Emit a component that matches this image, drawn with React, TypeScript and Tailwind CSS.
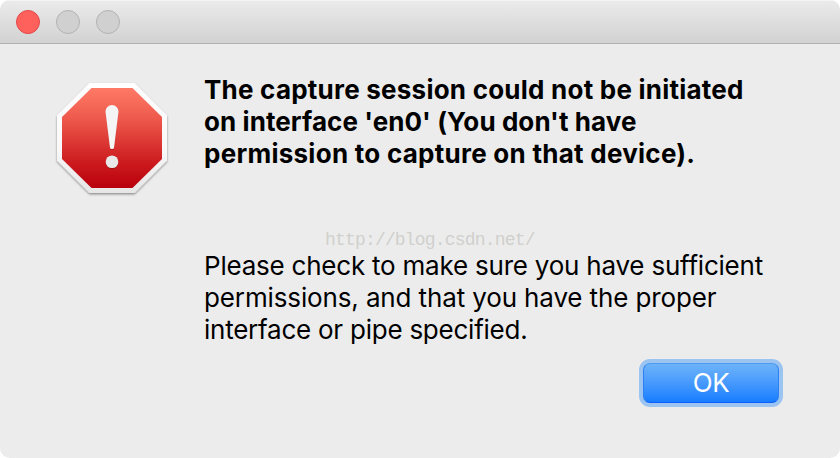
import { useState } from "react";

const StopIcon = () => (
  <svg width="120" height="122" viewBox="52 78 120 122" className="block" aria-hidden="true">
    <defs>
      <linearGradient id="rim" x1="0" y1="0" x2="0" y2="1">
        <stop offset="0" stopColor="#ffffff" />
        <stop offset="0.6" stopColor="#f8f8f8" />
        <stop offset="1" stopColor="#e6e6e6" />
      </linearGradient>
      <linearGradient id="red" x1="0" y1="0" x2="0" y2="1">
        <stop offset="0" stopColor="#ff7a66" />
        <stop offset="0.3" stopColor="#ee5a4d" />
        <stop offset="0.75" stopColor="#cc1a1e" />
        <stop offset="1" stopColor="#b9000d" />
      </linearGradient>
      <filter id="shadow" x="-10%" y="-10%" width="120%" height="125%">
        <feDropShadow dx="0" dy="1.3" stdDeviation="1.3" floodColor="#000" floodOpacity="0.42" />
      </filter>
      <filter id="markShadow" x="-30%" y="-10%" width="160%" height="125%">
        <feDropShadow dx="0" dy="0.8" stdDeviation="0.7" floodColor="#500" floodOpacity="0.4" />
      </filter>
    </defs>
    <path d="M89.500 83H134.500L167 115.500V160.500L134.500 193H89.500L57 160.500V115.500Z" fill="url(#rim)" filter="url(#shadow)" />
    <path d="M91.500 88H132.500L162 117V159L132.500 188H91.500L62 159V117Z" fill="url(#red)" />
    <g fill="#f5f5f5" filter="url(#markShadow)">
      <path d="M105.500 111.500A6.500 6.500 0 0 1 118.500 111.500L114 147.500Q113.800 149 112 149Q110.200 149 110 147.500Z" />
      <circle cx="112" cy="161.800" r="6.300" fill="#e9e9e9" />
    </g>
  </svg>
);

export default function App() {
  const [open, setOpen] = useState(true);

  if (!open) return null;

  return (
    <div className="h-[458px] w-[840px] bg-white font-['Inter',sans-serif] text-black">
      <div className="relative flex h-full flex-col overflow-hidden rounded-[10px] bg-[#ececec]">
        <header className="flex h-11 shrink-0 items-center gap-4 border-b border-[#b1b1b1] bg-linear-to-b from-[#ebebeb] to-[#d2d2d2] px-4 shadow-[inset_0_1px_0_#f5f5f5]">
          <button
            aria-label="Close"
            onClick={() => setOpen(false)}
            className="size-6 rounded-full border border-[#e2484a] bg-[#fe605c]"
          />
          <span className="size-6 rounded-full border border-[#b2b2b2] bg-[#d0d0d0]" />
          <span className="size-6 rounded-full border border-[#b2b2b2] bg-[#d0d0d0]" />
        </header>

        <main className="flex pl-[52px] pt-[30px]">
          <div className="mt-1 w-[152px] shrink-0">
            <StopIcon />
          </div>
          <div className="whitespace-nowrap text-[26px] leading-8">
            <h1 className="font-bold">
              <span className="block tracking-[0.23px]">The capture session could not be initiated</span>
              <span className="block tracking-[0.08px]">on interface 'en0' (You don't have</span>
              <span className="block tracking-[0.26px]">permission to capture on that device).</span>
            </h1>
            <p className="mt-20">
              <span className="block tracking-[-0.22px]">Please check to make sure you have sufficient</span>
              <span className="block tracking-[-0.13px]">permissions, and that you have the proper</span>
              <span className="block tracking-[-0.24px]">interface or pipe specified.</span>
            </p>
          </div>
        </main>

        <footer className="mt-[13px] flex justify-end pr-[57px]">
          <button
            onClick={() => setOpen(false)}
            className="h-12 w-36 rounded-[11px] bg-[#9bc4f0] p-1"
          >
            <span className="flex h-10 items-center justify-center rounded-[7px] border border-t-[#4b9cf0] border-x-[#2c7ff5] border-b-[#0f5cff] bg-linear-to-b from-[#6db3f9] to-[#147dff] text-[26px] leading-8 tracking-[-0.3px] text-white">
              OK
            </span>
          </button>
        </footer>

        <span className="pointer-events-none absolute left-[325px] top-[230px] font-['Liberation_Mono',monospace] text-[18px] leading-5 tracking-[-0.82px] text-[#d0d0cd]">
          http://blog.csdn.net/
        </span>
      </div>
    </div>
  );
}
